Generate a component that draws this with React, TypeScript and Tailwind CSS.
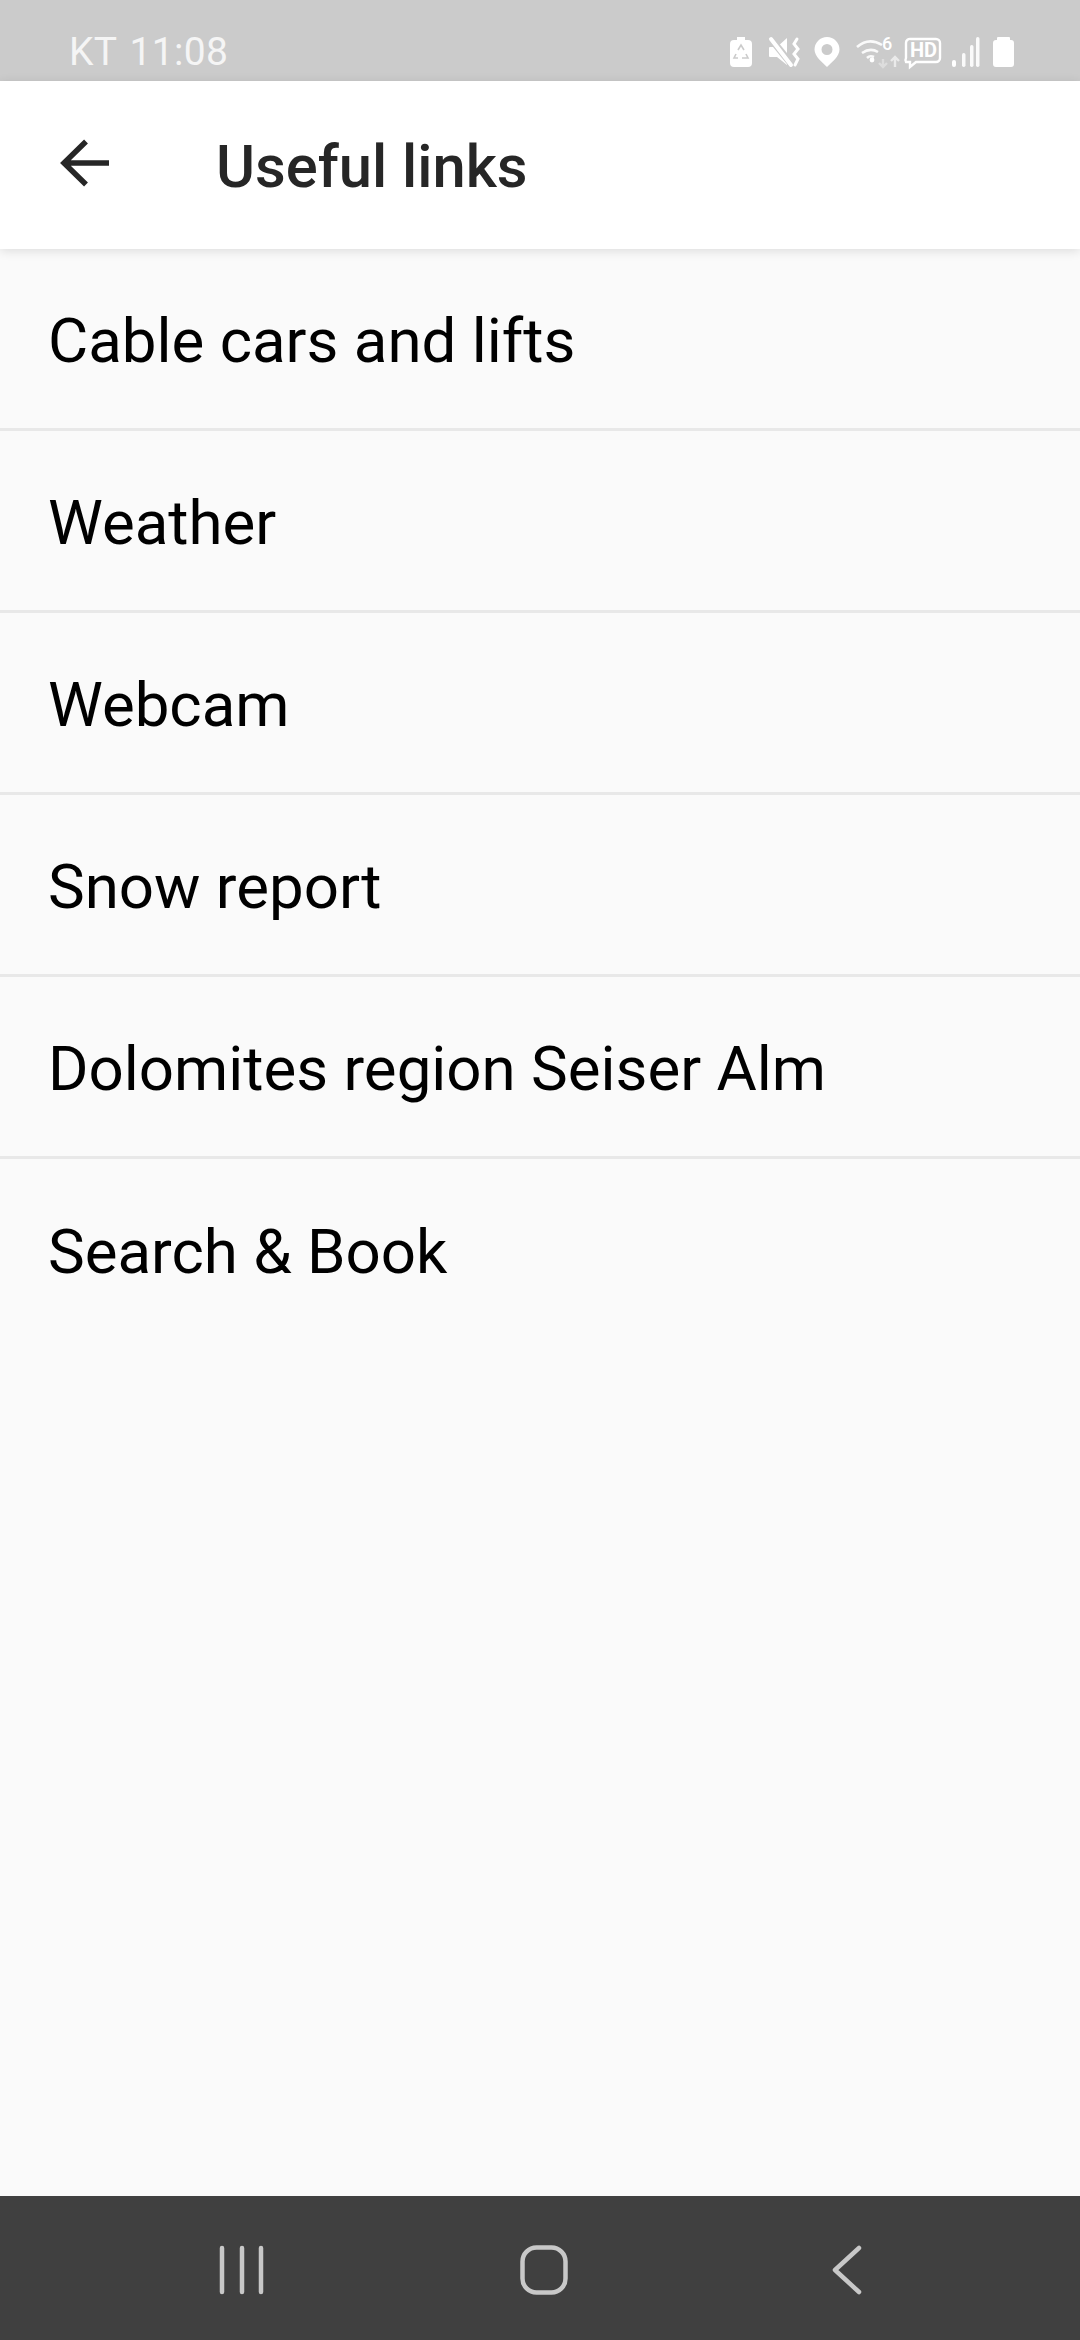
const items = ["Cable cars and lifts", "Weather", "Webcam", "Snow report", "Dolomites region Seiser Alm", "Search & Book"];

function StatusIcons() {
  return (
    <svg width="310" height="46" viewBox="730 28 310 46" className="block overflow-visible">
      {/* recycling battery */}
      <path d="M737 37h8v3h3a4 4 0 0 1 4 4v19a4 4 0 0 1-4 4h-14a4 4 0 0 1-4-4V44a4 4 0 0 1 4-4h3z" fill="#fff" />
      <path d="M738 50l3-5 3 5M746 54l2 4h-6M736 54l-2 4h4" fill="none" stroke="#cbcbcb" strokeWidth="1.6" />
      {/* vibrate / mute */}
      <path d="M770 47h7l10-9v27l-10-8h-7a1 1 0 0 1-1-1v-8a1 1 0 0 1 1-1z" fill="#fff" />
      <path d="M771 39l22 27" stroke="#cbcbcb" strokeWidth="7" />
      <path d="M771 39l20 26" stroke="#fff" strokeWidth="4" strokeLinecap="round" />
      <path d="M797 39l-3 5 4 5-4 5 4 5-3 6" fill="none" stroke="#fff" strokeWidth="3" strokeLinecap="round" />
      {/* location */}
      <path fillRule="evenodd" d="M827 37a12.5 12.5 0 0 1 12.5 12.5c0 7-8 13-12.5 17.500-4.500-4.500-12.500-10.500-12.500-17.500A12.500 12.500 0 0 1 827 37zm0 7a5.500 5.500 0 1 0 0 11 5.500 5.500 0 0 0 0-11z" fill="#fff" />
      {/* wifi 6 */}
      <path d="M857 47c8-7 17-7 25-2M862 53c6-4 11-4 16-1M867 58c2-2 5-2 7-1" fill="none" stroke="#fff" strokeWidth="2.6" opacity="0.9" />
      <circle cx="872" cy="60" r="2.4" fill="#fff" />
      <text x="882" y="50" fontFamily="Roboto, sans-serif" fontSize="18" fontWeight="500" fill="#fff">6</text>
      <path d="M883 59v8M879 63l4 4 4-4" fill="none" stroke="#fff" strokeWidth="2.4" opacity="0.35" />
      <path d="M895 67v-10M891 61l4-4 4 4" fill="none" stroke="#fff" strokeWidth="2.4" opacity="0.6" />
      {/* HD */}
      <path d="M911 39h25a4 4 0 0 1 4 4v15a4 4 0 0 1-4 4h-20l-6 5v-5h-4a4 4 0 0 1 0-4V43a4 4 0 0 1 5-4z" fill="none" stroke="#fff" strokeWidth="2.4" />
      <text x="910" y="57" fontFamily="Roboto, sans-serif" fontSize="20" fontWeight="700" fill="#fff">HD</text>
      {/* signal */}
      <rect x="952" y="60" width="4" height="7" rx="2" fill="#fff" />
      <rect x="962" y="53" width="3.500" height="14" rx="1.700" fill="#fff" opacity="0.9" />
      <rect x="970" y="45" width="3.500" height="22" rx="1.700" fill="#fff" opacity="0.9" />
      <rect x="976" y="37" width="3.500" height="30" rx="1.700" fill="#fff" opacity="0.9" />
      {/* battery */}
      <path d="M998 37h11a1 1 0 0 1 1 1v2h1a3 3 0 0 1 3 3v21a3 3 0 0 1-3 3h-15a3 3 0 0 1-3-3V43a3 3 0 0 1 3-3h1v-2a1 1 0 0 1 1-1z" fill="#fff" />
    </svg>
  );
}

export default function App() {
  return (
    <div className="flex h-[2340px] w-[1080px] flex-col overflow-hidden bg-[#fafafa] font-['Roboto',sans-serif]">
      <div className="flex h-[81px] shrink-0 items-start justify-between bg-[#cbcbcb] pl-[69px] pr-[40px] pt-[28px]">
        <span className="mt-[8px] text-[39px] leading-[32px] tracking-[0.3px] text-[#f5f5f5] [word-spacing:3px]">KT 11:08</span>
        <StatusIcons />
      </div>
      <header className="z-10 flex h-[168px] shrink-0 items-center bg-white pl-[60px] shadow-[0_2px_10px_rgba(0,0,0,0.12)]">
        <svg width="50" height="48" viewBox="0 0 50 48" className="mr-[106px] block shrink-0 -translate-y-[2px]">
          <path d="M49 24H4M26 2.5L4 24l22 21.5" fill="none" stroke="#262626" strokeWidth="5.5" />
        </svg>
        <h1 className="pt-[6px] text-[59.7px] font-medium leading-none text-[#262626]">Useful links</h1>
      </header>
      <main className="flex flex-1 flex-col">
        {items.map((t, i) => (
          <div
            key={t}
            className={`flex h-[182px] items-center pl-[48px] pt-[6px] text-[61.8px] leading-none text-black ${i < items.length - 1 ? "border-b-[3px] border-[#e8e8e8]" : ""}`}
          >
            {t}
          </div>
        ))}
      </main>
      <nav className="flex h-[144px] shrink-0 items-center bg-[#404040]">
        <div className="flex w-full translate-y-[2px] items-center pl-[219px]">
          <svg width="46" height="50" viewBox="0 0 46 50" className="block shrink-0">
            <path d="M3 3v44M23 3v44M42 3v44" stroke="#c8c8c8" strokeWidth="4.5" strokeLinecap="round" />
          </svg>
          <svg width="48" height="50" viewBox="0 0 48 50" className="ml-[255px] block shrink-0">
            <rect x="2.500" y="2.500" width="43" height="45" rx="14" fill="none" stroke="#c8c8c8" strokeWidth="4.5" />
          </svg>
          <svg width="30" height="50" viewBox="0 0 30 50" className="ml-[264px] block shrink-0">
            <path d="M27 3L3 25l24 22" fill="none" stroke="#c8c8c8" strokeWidth="4.5" strokeLinecap="round" strokeLinejoin="round" />
          </svg>
        </div>
      </nav>
    </div>
  );
}
